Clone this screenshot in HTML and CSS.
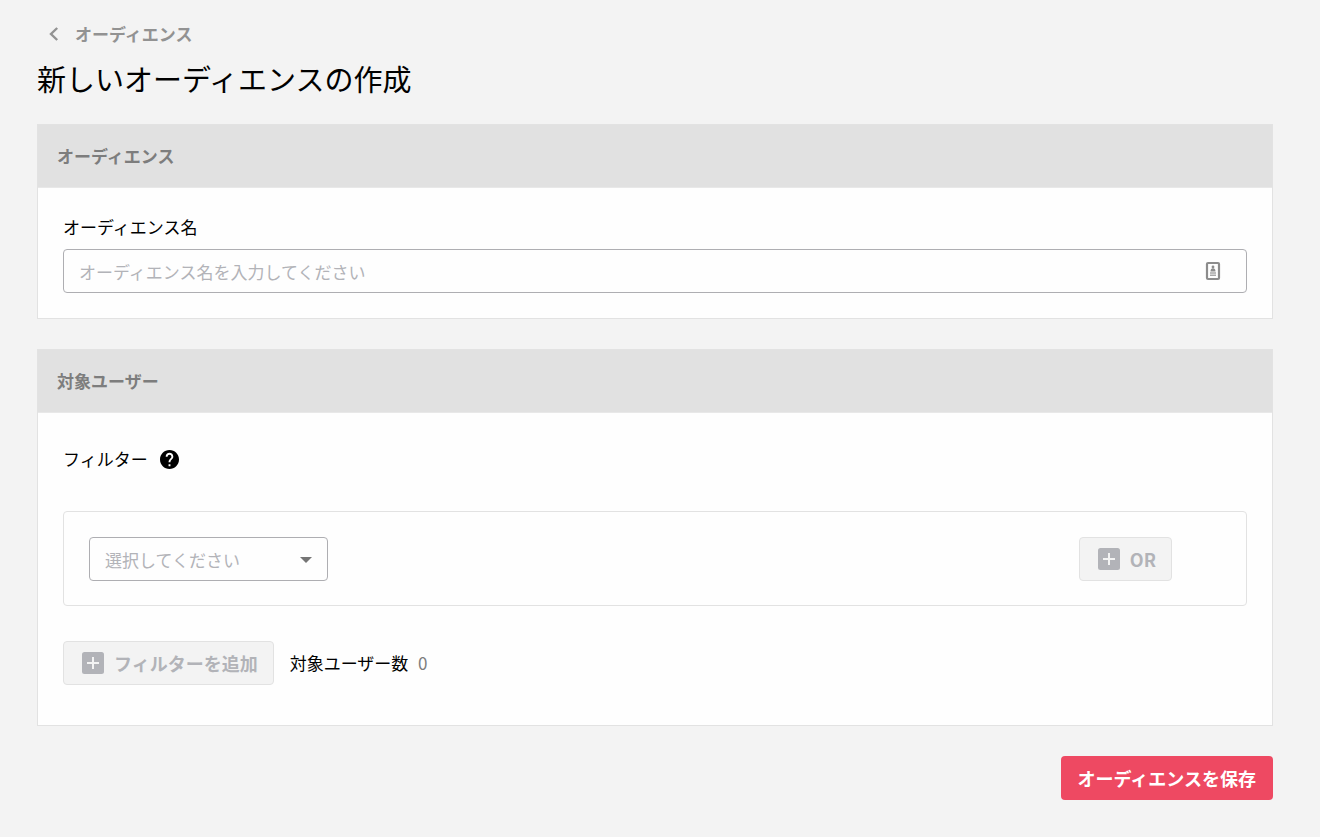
FILE: index.html
```html
<!DOCTYPE html>
<html lang="ja">
	<head>
		<meta charset="UTF-8" />
		<meta name="viewport" content="width=device-width, initial-scale=1.0" />
		<title>新しいオーディエンスの作成</title>
		<link rel="stylesheet" href="styles.css">
	</head>
	<body>
		<header class="page-header">
			<a class="back-link" href="#">
				<svg class="back-icon" viewBox="0 0 20 20" aria-hidden="true">
					<path d="M14.200 4 8 10l6.200 6" fill="none" stroke="currentColor" stroke-width="2.4" />
				</svg>
				オーディエンス
			</a>
			<h1>新しいオーディエンスの作成</h1>
		</header>

		<main>
			<form class="audience-form">
				<section class="card">
					<h2 class="card-header">オーディエンス</h2>
					<div class="card-body">
						<label class="field-label" for="audienceName">オーディエンス名</label>
						<div class="text-field">
							<input type="text" id="audienceName" placeholder="オーディエンス名を入力してください" />
							<svg class="contact-icon" viewBox="0 0 16 20" aria-hidden="true">
								<rect x="2" y="2" width="12" height="16" rx="1" fill="none" stroke="#8c8c8c" stroke-width="2.2" />
								<circle cx="8" cy="6" r="1.4" fill="#8c8c8c" />
								<path d="M5.500 10.500c0-2.200 1-3.300 2.500-3.300s2.500 1.100 2.500 3.300z" fill="#8c8c8c" />
								<path d="M5 12h6M5 14.200h6" stroke="#a8a8a8" stroke-width="1.6" />
							</svg>
						</div>
					</div>
				</section>

				<section class="card">
					<h2 class="card-header">対象ユーザー</h2>
					<div class="card-body card-body-filters">
						<div class="filter-title">
							<label for="filterType">フィルター</label>
							<svg class="help-icon" viewBox="2 2 20 20" aria-hidden="true">
								<path d="M12 2C6.480 2 2 6.480 2 12s4.480 10 10 10 10-4.480 10-10S17.520 2 12 2zm1 17h-2v-2h2v2zm2.070-7.750-.900.920C13.450 12.900 13 13.500 13 15h-2v-.500c0-1.100.450-2.100 1.170-2.830l1.240-1.260c.370-.360.590-.860.590-1.410 0-1.100-.900-2-2-2s-2 .900-2 2H8c0-2.210 1.790-4 4-4s4 1.790 4 4c0 .880-.360 1.680-.930 2.250z" />
							</svg>
						</div>

						<div class="filter-row">
							<div class="select-field">
								<select id="filterType">
									<option>選択してください</option>
								</select>
								<svg class="arrow-icon" viewBox="0 0 12 6" aria-hidden="true">
									<path d="M0 0h12L6 6z" />
								</svg>
							</div>
							<button type="button" class="btn btn-secondary" disabled>
								<svg class="plus-icon" viewBox="0 0 22 22" aria-hidden="true">
									<rect width="22" height="22" rx="2.5" fill="currentColor" />
									<path d="M11 5v12M5 11h12" stroke="#f3f3f3" stroke-width="2" />
								</svg>
								OR
							</button>
						</div>

						<div class="filter-footer">
							<button type="button" class="btn btn-secondary" disabled>
								<svg class="plus-icon" viewBox="0 0 22 22" aria-hidden="true">
									<rect width="22" height="22" rx="2.5" fill="currentColor" />
									<path d="M11 5v12M5 11h12" stroke="#f3f3f3" stroke-width="2" />
								</svg>
								フィルターを追加
							</button>
							<p class="user-count">対象ユーザー数 <span>0</span></p>
						</div>
					</div>
				</section>

				<div class="form-actions">
					<button type="submit" class="btn btn-primary">オーディエンスを保存</button>
				</div>
			</form>
		</main>
	</body>
</html>
```
FILE: styles.css
```css
:root {
	--bg-color: #f3f3f3;
	--text-color: #000000;
	--muted-color: #7d7d7d;
	--placeholder-color: #b2b3b8;
	--primary-color: #ee4962;
	--card-bg: #fefefe;
	--card-header-bg: #e1e1e1;
	--border-color: #e2e2e2;
	--input-border: #aeaeb2;
	--font-family: 'Noto Sans CJK JP', sans-serif;
}

* {
	box-sizing: border-box;
}

body {
	margin: 0;
	padding: 20px 47px 36px 37px;
	background-color: var(--bg-color);
	color: var(--text-color);
	font-family: var(--font-family);
	font-size: 17px;
	line-height: 28px;
}

input,
select,
button {
	font-family: inherit;
	font-size: inherit;
}

.back-link {
	display: inline-flex;
	align-items: center;
	gap: 12px;
	padding-left: 6px;
	color: #929292;
	font-weight: 700;
	text-decoration: none;
}

.back-icon {
	width: 20px;
	height: 20px;
}

h1 {
	margin: 3px 0 22px;
	font-size: 29px;
	font-weight: 400;
	line-height: 48px;
}

.audience-form {
	display: flex;
	flex-direction: column;
	gap: 30px;
}

.card {
	border: 1px solid var(--border-color);
	background-color: var(--card-bg);
}

.card-header {
	margin: 0;
	padding: 17px 19px;
	border-bottom: 1px solid #e8e8e8;
	background-color: var(--card-header-bg);
	color: var(--muted-color);
	font-size: 17px;
	font-weight: 700;
}

.card-body {
	padding: 25px;
}

.card-body-filters {
	padding: 32px 25px 40px;
}

.field-label {
	display: block;
	margin-bottom: 8px;
}

/* Поля ввода */
.text-field,
.select-field {
	position: relative;
}

.text-field input,
.select-field select {
	display: block;
	width: 100%;
	height: 44px;
	padding: 0 15px;
	border: 1px solid var(--input-border);
	border-radius: 4px;
	background-color: var(--card-bg);
}

.text-field input::placeholder {
	color: var(--placeholder-color);
	opacity: 1;
}

.contact-icon {
	position: absolute;
	top: 12px;
	right: 26px;
	width: 16px;
	height: 20px;
}

.select-field {
	width: 239px;
}

.select-field select {
	appearance: none;
	color: var(--placeholder-color);
}

.arrow-icon {
	position: absolute;
	top: 20px;
	right: 16px;
	width: 12px;
	height: 6px;
	fill: #757575;
	pointer-events: none;
}

.filter-title {
	display: flex;
	align-items: center;
	gap: 12px;
	margin-bottom: 38px;
}

.help-icon {
	width: 19px;
	height: 19px;
}

.filter-row {
	display: flex;
	justify-content: space-between;
	align-items: center;
	padding: 25px 74px 24px 25px;
	border: 1px solid var(--border-color);
	border-radius: 4px;
}

.filter-footer {
	display: flex;
	align-items: center;
	gap: 16px;
	margin-top: 35px;
}

.user-count {
	margin: 0;
}

.user-count span {
	margin-left: 6px;
	color: var(--muted-color);
}

.btn {
	display: inline-flex;
	align-items: center;
	gap: 10px;
	height: 44px;
	padding: 0 16px;
	border: 1px solid transparent;
	border-radius: 4px;
	font-size: 18px;
	font-weight: 700;
	cursor: pointer;
}

.btn-secondary {
	padding: 0 15px 0 18px;
	border-color: var(--border-color);
	background-color: var(--bg-color);
	color: var(--placeholder-color);
}

.btn-secondary:disabled {
	cursor: default;
}

.btn-primary {
	background-color: var(--primary-color);
	color: #ffffff;
}

.plus-icon {
	width: 22px;
	height: 22px;
}

.form-actions {
	display: flex;
	justify-content: flex-end;
}
```
